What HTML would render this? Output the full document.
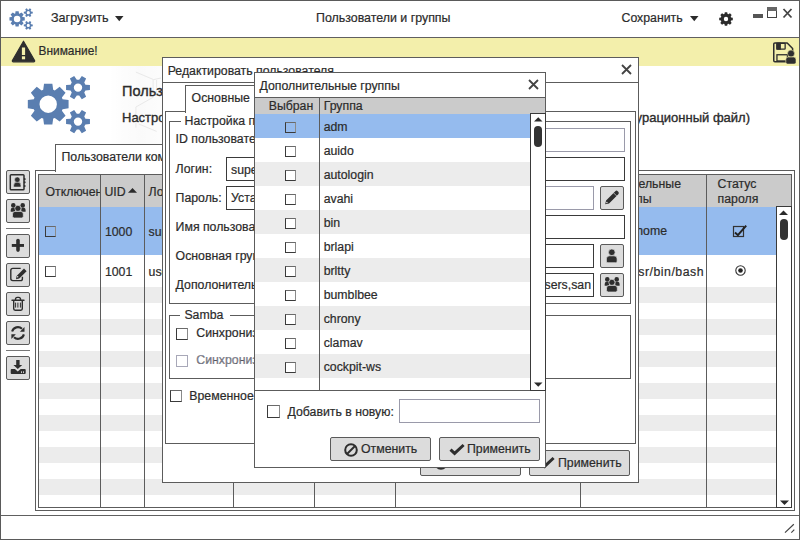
<!DOCTYPE html>
<html><head><meta charset="utf-8">
<style>
*{margin:0;padding:0;box-sizing:border-box}
html,body{width:800px;height:540px;overflow:hidden;background:#fff}
body{position:relative;font-family:"Liberation Sans",sans-serif;font-size:12.3px;color:#2b2b2b}
.a{position:absolute}
.b{position:absolute;border:1px solid #5c5c5c}
.t{position:absolute;white-space:nowrap;line-height:14px;font-size:12.3px;color:#2b2b2b;-webkit-text-stroke:0.2px #2b2b2b}
.hl{position:absolute;height:1px;background:#5c5c5c}
.vl{position:absolute;width:1px;background:#5c5c5c}
.btn{position:absolute;border:1px solid #5a5a5a;border-radius:2px;background:#dcdcdc}
.cb{position:absolute;width:11px;height:11px;border:1px solid #3a3a3a;border-right-color:#8a8a8a;border-top-color:#6a6a6a}
.inp{position:absolute;border:1px solid #3a3a3a;background:#fff}
.inpd{position:absolute;border:1px solid #9a9aaa;background:#fff}
.clip{position:absolute;overflow:hidden}
svg{position:absolute;overflow:visible}
</style></head><body>

<!-- ============ MAIN WINDOW ============ -->
<div class="b" style="left:0;top:0;width:800px;height:540px;border-color:#5a5a5a"></div>
<div class="hl" style="left:1px;top:37px;width:798px;background:#606060"></div>
<!-- title bar -->
<svg style="left:0;top:0" width="40" height="36"><g transform="translate(7.275 6.075) scale(0.375)"><path d="M40.55 29.20 L46.58 30.03 L46.58 38.37 L40.55 39.20 L39.89 40.81 L43.56 45.66 L37.66 51.56 L32.81 47.89 L31.20 48.55 L30.37 54.58 L22.03 54.58 L21.20 48.55 L19.59 47.89 L14.74 51.56 L8.84 45.66 L12.51 40.81 L11.85 39.20 L5.82 38.37 L5.82 30.03 L11.85 29.20 L12.51 27.59 L8.84 22.74 L14.74 16.84 L19.59 20.51 L21.20 19.85 L22.03 13.82 L30.37 13.82 L31.20 19.85 L32.81 20.51 L37.66 16.84 L43.56 22.74 L39.89 27.59Z M34.90 34.20 A8.7 8.7 0 1 0 17.50 34.20 A8.7 8.7 0 1 0 34.90 34.20Z M63.44 14.67 L67.94 15.12 L67.94 20.08 L63.44 20.53 L62.26 22.58 L64.12 26.70 L59.82 29.19 L57.18 25.51 L54.82 25.51 L52.18 29.19 L47.88 26.70 L49.74 22.58 L48.56 20.53 L44.06 20.08 L44.06 15.12 L48.56 14.67 L49.74 12.62 L47.88 8.50 L52.18 6.01 L54.82 9.69 L57.18 9.69 L59.82 6.01 L64.12 8.50 L62.26 12.62Z M60.20 17.60 A4.2 4.2 0 1 0 51.80 17.60 A4.2 4.2 0 1 0 60.20 17.60Z M63.44 48.67 L67.94 49.12 L67.94 54.08 L63.44 54.53 L62.26 56.58 L64.12 60.70 L59.82 63.19 L57.18 59.51 L54.82 59.51 L52.18 63.19 L47.88 60.70 L49.74 56.58 L48.56 54.53 L44.06 54.08 L44.06 49.12 L48.56 48.67 L49.74 46.62 L47.88 42.50 L52.18 40.01 L54.82 43.69 L57.18 43.69 L59.82 40.01 L64.12 42.50 L62.26 46.62Z M60.20 51.60 A4.2 4.2 0 1 0 51.80 51.60 A4.2 4.2 0 1 0 60.20 51.60Z" fill="#5a7eb0" fill-rule="evenodd"/></g></svg>
<div class="t" style="left:51px;top:11px;font-size:12.6px">Загрузить</div>
<svg style="left:115px;top:16px" width="9" height="6"><path d="M0 0h8.5L4.25 5.2z" fill="#2b2b2b"/></svg>
<div class="t" style="left:316px;top:11.3px;font-size:12.4px">Пользователи и группы</div>
<div class="t" style="left:621.5px;top:11.2px;font-size:12.3px">Сохранить</div>
<svg style="left:690px;top:16px" width="9" height="6"><path d="M0 0h8.5L4.25 5.2z" fill="#2b2b2b"/></svg>
<svg style="left:718px;top:11px" width="16" height="16"><path d="M13.06 6.42 L14.80 6.81 L14.80 9.19 L13.06 9.58 L12.69 10.46 L13.65 11.96 L11.96 13.65 L10.46 12.69 L9.58 13.06 L9.19 14.80 L6.81 14.80 L6.42 13.06 L5.54 12.69 L4.04 13.65 L2.35 11.96 L3.31 10.46 L2.94 9.58 L1.20 9.19 L1.20 6.81 L2.94 6.42 L3.31 5.54 L2.35 4.04 L4.04 2.35 L5.54 3.31 L6.42 2.94 L6.81 1.20 L9.19 1.20 L9.58 2.94 L10.46 3.31 L11.96 2.35 L13.65 4.04 L12.69 5.54Z M10.20 8.00 A2.2 2.2 0 1 0 5.80 8.00 A2.2 2.2 0 1 0 10.20 8.00Z" fill="#2b2b2b" fill-rule="evenodd"/></svg>
<div class="a" style="left:753px;top:14px;width:10px;height:4px;background:#555"></div>
<div class="b" style="left:767px;top:7px;width:10px;height:11px;border-color:#444"></div>
<div class="a" style="left:767px;top:7px;width:10px;height:4px;background:#666"></div>
<svg style="left:782px;top:8px" width="12" height="11"><path d="M1.5 1L9.5 9.5M9.5 1L1.5 9.5" stroke="#444" stroke-width="1.8"/></svg>

<!-- warning bar -->
<div class="a" style="left:1px;top:38px;width:798px;height:28px;background:#f3efab"></div>
<svg style="left:11px;top:40px" width="25" height="23" viewBox="0 0 25 23">
  <path d="M12.5 1.2L23.6 20.5Q24 21.8 22.7 21.8H2.3Q1 21.8 1.4 20.5z" fill="#2e2e2e" stroke="#2e2e2e" stroke-width="1.2" stroke-linejoin="round"/>
  <rect x="10.9" y="7.5" width="3.2" height="7.5" fill="#f3efab"/>
  <rect x="10.9" y="16.3" width="3.2" height="3" fill="#f3efab"/>
</svg>
<div class="t" style="left:38.5px;top:43.5px;font-size:11.9px">Внимание!</div>
<svg style="left:768px;top:38px" width="32" height="30">
  <path d="M20 23.65H6.9q-1.15 0-1.15-1.15V6.1q0-1.15 1.15-1.15H19.2l5.4 5.5V14" fill="none" stroke="#2e2e2e" stroke-width="1.5" stroke-linejoin="round"/>
  <rect x="8.95" y="5.35" width="8.2" height="5.8" rx="0.6" fill="none" stroke="#2e2e2e" stroke-width="1.3"/>
  <rect x="8.3" y="4.7" width="4.6" height="7" fill="#2e2e2e"/>
  <rect x="8.95" y="16.75" width="10.5" height="6.2" fill="none" stroke="#2e2e2e" stroke-width="1.3"/>
  <circle cx="23" cy="15.6" r="3.5" fill="#2e2e2e" stroke="#f3efab" stroke-width="0.5"/>
  <path d="M20.2 19h5.4q2.4 0 2.4 2.4v2.9q0 1.8-1.8 1.8h-6.6q-1.8 0-1.8-1.8v-2.9q0-2.4 2.4-2.4z" fill="#2e2e2e" stroke="#f3efab" stroke-width="0.6"/>
</svg>

<!-- header -->
<div class="a" style="left:108px;top:66px;width:54px;height:78px;background:linear-gradient(to right,rgba(0,0,0,0) 0,rgba(0,0,0,0.012) 30%,rgba(0,0,0,0.02) 60%,rgba(0,0,0,0.01) 100%)"></div>
<svg style="left:0;top:0" width="170" height="145"><path d="M135.9 72.1L153.6 79.6L161 78M153.1 79.6V97.3L135.9 107V127.7M156.6 80V96M138.8 124L156.6 131.4" fill="none" stroke="#e9e9e9" stroke-width="1"/></svg>
<svg style="left:22px;top:70px" width="75" height="68"><path d="M40.55 29.20 L46.58 30.03 L46.58 38.37 L40.55 39.20 L39.89 40.81 L43.56 45.66 L37.66 51.56 L32.81 47.89 L31.20 48.55 L30.37 54.58 L22.03 54.58 L21.20 48.55 L19.59 47.89 L14.74 51.56 L8.84 45.66 L12.51 40.81 L11.85 39.20 L5.82 38.37 L5.82 30.03 L11.85 29.20 L12.51 27.59 L8.84 22.74 L14.74 16.84 L19.59 20.51 L21.20 19.85 L22.03 13.82 L30.37 13.82 L31.20 19.85 L32.81 20.51 L37.66 16.84 L43.56 22.74 L39.89 27.59Z M34.90 34.20 A8.7 8.7 0 1 0 17.50 34.20 A8.7 8.7 0 1 0 34.90 34.20Z M63.44 14.67 L67.94 15.12 L67.94 20.08 L63.44 20.53 L62.26 22.58 L64.12 26.70 L59.82 29.19 L57.18 25.51 L54.82 25.51 L52.18 29.19 L47.88 26.70 L49.74 22.58 L48.56 20.53 L44.06 20.08 L44.06 15.12 L48.56 14.67 L49.74 12.62 L47.88 8.50 L52.18 6.01 L54.82 9.69 L57.18 9.69 L59.82 6.01 L64.12 8.50 L62.26 12.62Z M60.20 17.60 A4.2 4.2 0 1 0 51.80 17.60 A4.2 4.2 0 1 0 60.20 17.60Z M63.44 48.67 L67.94 49.12 L67.94 54.08 L63.44 54.53 L62.26 56.58 L64.12 60.70 L59.82 63.19 L57.18 59.51 L54.82 59.51 L52.18 63.19 L47.88 60.70 L49.74 56.58 L48.56 54.53 L44.06 54.08 L44.06 49.12 L48.56 48.67 L49.74 46.62 L47.88 42.50 L52.18 40.01 L54.82 43.69 L57.18 43.69 L59.82 40.01 L64.12 42.50 L62.26 46.62Z M60.20 51.60 A4.2 4.2 0 1 0 51.80 51.60 A4.2 4.2 0 1 0 60.20 51.60Z" fill="#5a7eb0" fill-rule="evenodd"/></svg>
<div class="t" style="left:122px;top:82.6px;font-size:14.5px;line-height:16px;-webkit-text-stroke:0.35px #2b2b2b">Пользователи и группы</div>
<div class="t" style="left:122px;top:110.7px;font-size:13px;-webkit-text-stroke:0.35px #2b2b2b">Настройка пользователей и групп</div>
<div class="t" style="left:639px;top:110.7px;font-size:13px;-webkit-text-stroke:0.35px #2b2b2b;width:111px;text-align:right;overflow:hidden;direction:rtl"><span style="direction:ltr;unicode-bidi:bidi-override">(конфигурационный файл)</span></div>

<!-- tab -->
<div class="a" style="left:55px;top:144px;width:200px;height:28px;border:1px solid #5c5c5c;border-bottom:none;background:#fff"></div>
<div class="t" style="left:61.5px;top:149.5px">Пользователи компьютера</div>
<!-- panel outer -->
<div class="a" style="left:35px;top:170px;width:760px;height:341px;border:1px solid #5c5c5c;border-top:none"></div>
<div class="hl" style="left:35px;top:170px;width:21px"></div>
<div class="hl" style="left:254px;top:170px;width:541px"></div>

<!-- table -->
<div class="b" style="left:38px;top:174px;width:754px;height:334px"></div>
<div class="a" style="left:39px;top:175px;width:752px;height:32px;background:#cbcbcb"></div>
<div class="a" style="left:39px;top:207px;width:737px;height:48px;background:#95bbee"></div>
<div class="a" id="stripes" style="left:39px;top:287px;width:737px;height:220px;background:repeating-linear-gradient(to bottom,#ececec 0,#ececec 16px,#fff 16px,#fff 32px)"></div>
<div class="vl" style="left:100px;top:175px;height:332px"></div>
<div class="vl" style="left:144px;top:175px;height:332px"></div>
<div class="vl" style="left:233px;top:175px;height:332px"></div>
<div class="vl" style="left:314px;top:175px;height:332px"></div>
<div class="vl" style="left:395px;top:175px;height:332px"></div>
<div class="vl" style="left:580px;top:175px;height:332px"></div>
<div class="vl" style="left:706px;top:175px;height:332px"></div>
<div class="clip" style="left:39px;top:175px;width:61px;height:32px"><div class="t" style="left:6.5px;top:9.6px">Отключен</div></div>
<div class="t" style="left:104.4px;top:184.6px">UID</div>
<svg style="left:128px;top:188px" width="10" height="6"><path d="M0 4.8h9L4.5 0z" fill="#2b2b2b"/></svg>
<div class="clip" style="left:145px;top:175px;width:88px;height:80px"><div class="t" style="left:3.6px;top:9.6px">Логин</div><div class="t" style="left:3.6px;top:49.8px">super</div></div>
<div class="clip" style="left:581px;top:175px;width:125px;height:120px">
  <div class="t" style="right:25px;top:2px">Дополнительные</div>
  <div class="t" style="right:54.5px;top:16.8px">группы</div>
  <div class="t" style="right:39px;top:49.4px">/home</div>
  <div class="t" style="right:2px;top:89.6px;letter-spacing:0.5px">/usr/bin/bash</div>
</div>
<div class="t" style="left:717.6px;top:177px">Статус</div>
<div class="t" style="left:717.6px;top:191.8px">пароля</div>
<div class="cb" style="left:45px;top:226px"></div>
<div class="t" style="left:104.9px;top:224.8px">1000</div>
<div class="cb" style="left:45px;top:266px;background:#fff"></div>
<div class="t" style="left:104.9px;top:264.6px">1001</div>
<div class="clip" style="left:145px;top:255px;width:20px;height:30px"><div class="t" style="left:3.6px;top:9.6px">user</div></div>
<svg style="left:732px;top:222px" width="16" height="16"><rect x="1.5" y="4.5" width="10" height="10" fill="none" stroke="#333" stroke-width="1.2"/><path d="M3 10.6L5.9 13.2L14.2 3.7" fill="none" stroke="#222" stroke-width="2"/></svg>
<svg style="left:734.5px;top:265.4px" width="12" height="12"><circle cx="5.5" cy="5.5" r="4.7" fill="#fff" stroke="#333" stroke-width="1.1"/><circle cx="5.5" cy="5.5" r="2.3" fill="#222"/></svg>
<!-- scrollbar main -->
<div class="a" style="left:776px;top:206px;width:16px;height:302px;background:#fff;border:1px solid #3a3a3a"></div>
<svg style="left:779px;top:210px" width="10" height="6"><path d="M0 5h9L4.5 0.5z" fill="#2b2b2b"/></svg>
<div class="a" style="left:780px;top:219px;width:8px;height:21px;border-radius:4px;background:#333"></div>
<svg style="left:779.5px;top:499.5px" width="10" height="6"><path d="M0 0.5h9L4.5 5z" fill="#2b2b2b"/></svg>

<!-- left toolbar -->
<div class="btn" style="left:6px;top:170px;width:24px;height:24px"></div>
<svg style="left:6px;top:170px" width="24" height="24"><path d="M5.2 4.7h11.9q0.9 0 0.9 0.9v13.3q0 0.9-0.9 0.9H5.2q-0.9 0-0.9-0.9V5.6q0-0.9 0.9-0.9z" fill="none" stroke="#2e2e2e" stroke-width="1.5"/><path d="M7.7 17v-1.6q0-3.3 3.6-3.3t3.6 3.3v1.6z" fill="#2e2e2e" stroke="#dcdcdc" stroke-width="0.5"/><circle cx="11.3" cy="9.7" r="2.7" fill="#2e2e2e" stroke="#dcdcdc" stroke-width="0.5"/><rect x="17.8" y="8" width="1.8" height="2.2" rx="0.8" fill="#2e2e2e"/><rect x="17.8" y="11.3" width="1.8" height="2.1" rx="0.8" fill="#2e2e2e"/><rect x="17.8" y="14.9" width="1.8" height="2.2" rx="0.8" fill="#2e2e2e"/></svg>
<div class="btn" style="left:6px;top:199px;width:24px;height:24px"></div>
<svg style="left:6px;top:199px" width="24" height="24"><circle cx="7.3" cy="6.4" r="2.3" fill="#2e2e2e"/><circle cx="16.7" cy="6.4" r="2.3" fill="#2e2e2e"/><path d="M4.7 12.7v-1.6q0-2.3 2.1-2.3h2.2v3.9z M19.6 12.7v-1.6q0-2.3-2.1-2.3h-2.2v3.9z" fill="#2e2e2e"/><circle cx="11.9" cy="9.4" r="3.1" fill="#2e2e2e" stroke="#dcdcdc" stroke-width="0.7"/><path d="M6.5 17.2v-2.2q0-2.6 2.6-2.6h5.6q2.6 0 2.6 2.6v2.2q0 1.8-1.8 1.8H8.3q-1.8 0-1.8-1.8z" fill="#2e2e2e" stroke="#dcdcdc" stroke-width="0.7"/></svg>
<div class="hl" style="left:6px;top:228px;width:24px;background:#777"></div>
<div class="btn" style="left:6px;top:234px;width:24px;height:24px"></div>
<svg style="left:6px;top:234px" width="24" height="24"><path d="M12 6.6v9.5" stroke="#2e2e2e" stroke-width="3.6" stroke-linecap="round"/><rect x="5.8" y="10" width="12.2" height="2.9" fill="#2e2e2e"/></svg>
<div class="btn" style="left:6px;top:263px;width:24px;height:24px"></div>
<svg style="left:6px;top:263px" width="24" height="24"><path d="M14.7 5.4H6.9Q4.8 5.4 4.8 7.5v8.1q0 2 2 2h7.7q1.9 0 1.9-1.9v-1.9" fill="none" stroke="#2e2e2e" stroke-width="1.4"/><path d="M10 16.2l0.6-3.2 7.4-7.4 2.6 2.6-7.4 7.4z" fill="#2e2e2e"/><circle cx="11.6" cy="13.8" r="0.8" fill="#dcdcdc"/></svg>
<div class="btn" style="left:6px;top:292px;width:24px;height:24px"></div>
<svg style="left:6px;top:292px" width="24" height="24"><path d="M6 8.2h12" stroke="#2e2e2e" stroke-width="1.4" stroke-linecap="round"/><path d="M9.5 8.2v-1q0-1.8 1.8-1.8h1.4q1.8 0 1.8 1.8v1" fill="none" stroke="#2e2e2e" stroke-width="1.4"/><path d="M7.7 8.5v8.3q0 1.4 1.4 1.4h5.8q1.4 0 1.4-1.4V8.5" fill="none" stroke="#2e2e2e" stroke-width="1.4"/><path d="M9.6 10.6v5M11.9 10.6v5M14.4 10.6v5" stroke="#2e2e2e" stroke-width="1"/></svg>
<div class="btn" style="left:6px;top:321px;width:24px;height:24px"></div>
<svg style="left:6px;top:321px" width="24" height="24"><path d="M6.1 10.5A6 6 0 0 1 16 7.8" fill="none" stroke="#2e2e2e" stroke-width="2.1"/><path d="M18.5 6v4.8h-4.6z" fill="#2e2e2e"/><path d="M17.9 13.4A6 6 0 0 1 8 16.2" fill="none" stroke="#2e2e2e" stroke-width="2.1"/><path d="M5.4 18v-4.7h4.4z" fill="#2e2e2e"/></svg>
<div class="hl" style="left:6px;top:350px;width:24px;background:#777"></div>
<div class="btn" style="left:6px;top:356px;width:24px;height:24px"></div>
<svg style="left:6px;top:356px" width="24" height="24"><path d="M10.2 4h3.4v4.9h2.6l-4.4 4.1-4.4-4.1h2.8z" fill="#2e2e2e"/><path d="M5.6 13.1h3.3l2.9 2.4 2.9-2.4h4.1q0.9 0 0.9 0.9v3.1q0 0.9-0.9 0.9H5.6q-0.9 0-0.9-0.9V14q0-0.9 0.9-0.9z" fill="#2e2e2e"/><rect x="15.1" y="15.3" width="0.9" height="1.8" fill="#dcdcdc"/><rect x="17" y="15.3" width="0.9" height="1.8" fill="#dcdcdc"/></svg>

<!-- status bar -->
<div class="hl" style="left:1px;top:515px;width:798px;background:#606060"></div>
<svg style="left:780px;top:520px" width="18" height="18"><path d="M5 12.6L13.8 4.3M11.3 12.6L14.3 9.6" stroke="#444" stroke-width="1.2"/></svg>

<!-- ============ DIALOG 1 ============ -->
<div class="b" style="left:162px;top:57px;width:477px;height:426px;background:#fff"></div>
<div class="t" style="left:167.7px;top:63.7px">Редактировать пользователя</div>
<svg style="left:621px;top:64px" width="11" height="11"><path d="M1 1L10 10M10 1L1 10" stroke="#444" stroke-width="1.8"/></svg>
<div class="hl" style="left:162px;top:82px;width:477px"></div>
<!-- tab основные -->
<div class="a" style="left:185px;top:85px;width:80px;height:28px;border:1px solid #5c5c5c;border-bottom:none;background:#fff"></div>
<div class="t" style="left:191.6px;top:90.5px">Основные</div>
<div class="a" style="left:165px;top:111px;width:471px;height:333px;border:1px solid #5c5c5c;border-top:none"></div>
<div class="hl" style="left:165px;top:111px;width:21px"></div>
<div class="hl" style="left:264px;top:111px;width:372px"></div>
<!-- group box 1 -->
<div class="b" style="left:169px;top:121px;width:462px;height:183px"></div>
<div class="a" style="left:181px;top:116px;width:150px;height:10px;background:#fff"></div>
<div class="t" style="left:184.6px;top:114px">Настройка пользователя</div>
<div class="t" style="left:175.6px;top:132px">ID пользователя:</div>
<div class="inpd" style="left:330px;top:128px;width:295px;height:24px"></div>
<div class="t" style="left:175.6px;top:162.3px">Логин:</div>
<div class="inp" style="left:226px;top:157px;width:399px;height:24px"></div>
<div class="t" style="left:231px;top:162.5px">super</div>
<div class="t" style="left:175.6px;top:190.7px">Пароль:</div>
<div class="inp" style="left:226px;top:186px;width:120px;height:24px"></div><div class="inpd" style="left:330px;top:186px;width:264px;height:24px"></div>
<div class="t" style="left:231px;top:190.7px">Установлен</div>
<div class="btn" style="left:600px;top:186px;width:24px;height:24px"></div>
<svg style="left:600px;top:186px" width="24" height="24"><path d="M5.2 18.3L6.08 14.46L15.3 5.2Q16.5 4 17.7 5.2L18.3 5.8Q19.5 7 18.3 8.2L9.05 17.43Z" fill="#2e2e2e"/><path d="M13.6 6.9L17.1 10.4" stroke="#dcdcdc" stroke-width="0.7"/><circle cx="6.9" cy="16.6" r="0.75" fill="#dcdcdc"/></svg>
<div class="t" style="left:175.6px;top:219.7px">Имя пользователя:</div>
<div class="inp" style="left:330px;top:215px;width:295px;height:24px"></div>
<div class="t" style="left:175.6px;top:249px">Основная группа:</div>
<div class="inp" style="left:330px;top:244px;width:264px;height:24px"></div>
<div class="btn" style="left:600px;top:244px;width:24px;height:24px"></div>
<svg style="left:600px;top:244px" width="24" height="24"><path d="M9.6 11.8h4.4q3.1 0 3.1 3.1v2.3q0 1.5-1.5 1.5H7.9q-1.5 0-1.5-1.5v-2.3q0-3.1 3.2-3.1z" fill="#2e2e2e" stroke="#dcdcdc" stroke-width="0.7"/><circle cx="11.8" cy="8.3" r="3.3" fill="#2e2e2e" stroke="#dcdcdc" stroke-width="0.7"/></svg>
<div class="t" style="left:175.6px;top:278px">Дополонительные группы:</div>
<div class="inp" style="left:330px;top:273px;width:264px;height:24px"></div>
<div class="clip" style="left:331px;top:274px;width:262px;height:22px"><div class="t" style="right:2px;top:4px">adm,audio,users,san</div></div>
<div class="btn" style="left:600px;top:273px;width:24px;height:24px"></div>
<svg style="left:600px;top:273px" width="24" height="24"><circle cx="7.3" cy="6.4" r="2.3" fill="#2e2e2e"/><circle cx="16.7" cy="6.4" r="2.3" fill="#2e2e2e"/><path d="M4.7 12.7v-1.6q0-2.3 2.1-2.3h2.2v3.9z M19.6 12.7v-1.6q0-2.3-2.1-2.3h-2.2v3.9z" fill="#2e2e2e"/><circle cx="11.9" cy="9.4" r="3.1" fill="#2e2e2e" stroke="#dcdcdc" stroke-width="0.7"/><path d="M6.5 17.2v-2.2q0-2.6 2.6-2.6h5.6q2.6 0 2.6 2.6v2.2q0 1.8-1.8 1.8H8.3q-1.8 0-1.8-1.8z" fill="#2e2e2e" stroke="#dcdcdc" stroke-width="0.7"/></svg>
<!-- samba -->
<div class="b" style="left:169px;top:315px;width:462px;height:64px"></div>
<div class="a" style="left:180px;top:310px;width:50px;height:10px;background:#fff"></div>
<div class="t" style="left:184.4px;top:308px">Samba</div>
<div class="cb" style="left:176px;top:328px;background:#fff;width:12px;height:12px"></div>
<div class="t" style="left:196.3px;top:326px">Синхронизировать</div>
<div class="cb" style="left:176px;top:355px;background:#fff;border-color:#a8a8b8;width:12px;height:12px"></div>
<div class="t" style="left:196.3px;top:353px;color:#8a8a9a">Синхронизировать</div>
<div class="cb" style="left:170px;top:390px;background:#fff;width:12px;height:12px"></div>
<div class="t" style="left:189.3px;top:388.5px">Временное</div>
<!-- buttons -->
<div class="btn" style="left:420px;top:450px;width:101px;height:26px"></div>
<svg style="left:432.5px;top:455px" width="16" height="16"><circle cx="8" cy="8" r="5.8" fill="none" stroke="#2e2e2e" stroke-width="2"/><path d="M4 12L12 4" stroke="#2e2e2e" stroke-width="2"/></svg>
<div class="btn" style="left:529px;top:450px;width:101px;height:26px"></div>
<svg style="left:539px;top:454px" width="16" height="16"><path d="M1.5 8.6L5.6 12.4L14.6 4" fill="none" stroke="#2e2e2e" stroke-width="3"/></svg>
<div class="t" style="left:558px;top:456px">Применить</div>

<!-- ============ DIALOG 2 ============ -->
<div class="b" style="left:254px;top:72px;width:292px;height:396px;background:#fff"></div>
<div class="t" style="left:259.5px;top:78.7px">Дополнительные группы</div>
<svg style="left:528px;top:79px" width="11" height="11"><path d="M1 1L10 10M10 1L1 10" stroke="#444" stroke-width="1.8"/></svg>
<div class="hl" style="left:254px;top:97px;width:292px"></div>
<div class="a" style="left:255px;top:98px;width:290px;height:16px;background:#cbcbcb"></div>
<div class="a" style="left:255px;top:114px;width:275px;height:24px;background:#95bbee"></div>
<div class="a" style="left:255px;top:162px;width:275px;height:228px;background:repeating-linear-gradient(to bottom,#ececec 0,#ececec 24px,#fff 24px,#fff 48px)"></div>
<div class="vl" style="left:319px;top:98px;height:292px"></div>
<div class="hl" style="left:254px;top:390px;width:292px"></div>
<div class="t" style="left:268.7px;top:99.3px">Выбран</div>
<div class="t" style="left:323.7px;top:99.3px">Группа</div>
<div class="cb" style="left:285px;top:122px;"></div><div class="t" style="left:323.7px;top:120.0px">adm</div>
<div class="cb" style="left:285px;top:146px;background:#fff;"></div><div class="t" style="left:323.7px;top:144.0px">auido</div>
<div class="cb" style="left:285px;top:170px;background:#fff;"></div><div class="t" style="left:323.7px;top:168.0px">autologin</div>
<div class="cb" style="left:285px;top:194px;background:#fff;"></div><div class="t" style="left:323.7px;top:192.0px">avahi</div>
<div class="cb" style="left:285px;top:218px;background:#fff;"></div><div class="t" style="left:323.7px;top:216.0px">bin</div>
<div class="cb" style="left:285px;top:242px;background:#fff;"></div><div class="t" style="left:323.7px;top:240.0px">brlapi</div>
<div class="cb" style="left:285px;top:266px;background:#fff;"></div><div class="t" style="left:323.7px;top:264.0px">brltty</div>
<div class="cb" style="left:285px;top:290px;background:#fff;"></div><div class="t" style="left:323.7px;top:288.0px">bumblbee</div>
<div class="cb" style="left:285px;top:314px;background:#fff;"></div><div class="t" style="left:323.7px;top:312.0px">chrony</div>
<div class="cb" style="left:285px;top:338px;background:#fff;"></div><div class="t" style="left:323.7px;top:336.0px">clamav</div>
<div class="cb" style="left:285px;top:362px;background:#fff;"></div><div class="t" style="left:323.7px;top:360.0px">cockpit-ws</div>
<!-- scrollbar -->
<div class="a" style="left:530px;top:113px;width:16px;height:278px;background:#fff;border:1px solid #3a3a3a"></div>
<svg style="left:533.5px;top:116.5px" width="10" height="6"><path d="M0 4.5h8.5L4.25 0.3z" fill="#2b2b2b"/></svg>
<div class="a" style="left:534px;top:126px;width:8px;height:21px;border-radius:4px;background:#333"></div>
<svg style="left:533.5px;top:382px" width="10" height="6"><path d="M0 0.5h8.5L4.25 4.7z" fill="#2b2b2b"/></svg>
<!-- bottom -->
<div class="cb" style="left:267px;top:405px;width:13px;height:13px;background:#fff"></div>
<div class="t" style="left:287.5px;top:405px">Добавить в новую:</div>
<div class="inpd" style="left:399px;top:399px;width:141px;height:24px"></div>
<div class="btn" style="left:330px;top:437px;width:101px;height:24px"></div>
<svg style="left:342.5px;top:441.5px" width="16" height="16"><circle cx="8" cy="8" r="5.8" fill="none" stroke="#2e2e2e" stroke-width="2"/><path d="M4 12L12 4" stroke="#2e2e2e" stroke-width="2"/></svg>
<div class="t" style="left:361px;top:442px">Отменить</div>
<div class="btn" style="left:439px;top:437px;width:101px;height:24px"></div>
<svg style="left:449px;top:441px" width="16" height="16"><path d="M1.5 8.6L5.6 12.4L14.6 4" fill="none" stroke="#2e2e2e" stroke-width="3"/></svg>
<div class="t" style="left:467px;top:442px">Применить</div>

</body></html>
